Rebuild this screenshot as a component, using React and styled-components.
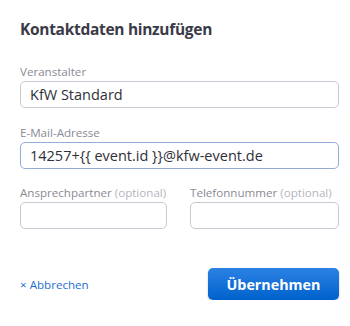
import React from "react";
import styled, { createGlobalStyle } from "styled-components";

const GlobalStyle = createGlobalStyle`
  body {
    margin: 0;
    background: #ffffff;
    font-family: "Open Sans", "Noto Sans", sans-serif;
  }
`;

const Dialog = styled.div`
  width: 319px;
  padding: 18px 0 0 20px;
`;

const Title = styled.h2`
  margin: 0 0 24px;
  font-size: 15.5px;
  font-weight: 700;
  color: #3b3b47;
  line-height: 22px;
  letter-spacing: -0.3px;
`;

const Field = styled.label`
  display: flex;
  flex-direction: column;
  margin-bottom: ${(p) => p.$gap || 0}px;
`;

const Label = styled.span`
  font-size: 11.6px;
  line-height: 15px;
  color: #8a8a94;
  margin-bottom: 2px;
  white-space: nowrap;
`;

const Hint = styled.span`
  color: #b5b5c0;
`;

const Input = styled.div`
  box-sizing: border-box;
  height: 27px;
  border: 1px solid ${(p) => (p.$focused ? "#94acd6" : "#c9c9d3")};
  border-radius: 5px;
  padding: 0 9px;
  font-size: 14.5px;
  line-height: 25px;
  color: #2f2f38;
  white-space: nowrap;
`;

const Row = styled.div`
  display: grid;
  grid-template-columns: 147px 149px;
  column-gap: 23px;
`;

const Footer = styled.div`
  display: flex;
  justify-content: space-between;
  align-items: center;
  margin-top: 39px;
`;

const CancelLink = styled.a`
  font-size: 11.6px;
  color: #1f6fd0;
  text-decoration: none;
  display: flex;
  align-items: center;
  gap: 3px;
`;

const SubmitButton = styled.button`
  width: 131px;
  height: 32px;
  border: none;
  border-radius: 5px;
  background: linear-gradient(#2c82e4, #0061cc);
  box-shadow: 0 1px 2px rgba(0, 40, 100, 0.3);
  color: #fff;
  font-family: inherit;
  font-size: 14.3px;
  font-weight: 700;
  cursor: pointer;
`;

export default function App() {
  return (
    <>
      <GlobalStyle />
      <Dialog>
        <Title>Kontaktdaten hinzufügen</Title>
        <Field $gap={17}>
          <Label>Veranstalter</Label>
          <Input>KfW Standard</Input>
        </Field>
        <Field $gap={16}>
          <Label>E-Mail-Adresse</Label>
          <Input $focused>14257+{"{{"} event.id {"}}"}@kfw-event.de</Input>
        </Field>
        <Row>
          <Field>
            <Label>
              Ansprechpartner <Hint>(optional)</Hint>
            </Label>
            <Input />
          </Field>
          <Field>
            <Label>
              Telefonnummer <Hint>(optional)</Hint>
            </Label>
            <Input />
          </Field>
        </Row>
        <Footer>
          <CancelLink href="#">
            <span>×</span>
            <span>Abbrechen</span>
          </CancelLink>
          <SubmitButton>Übernehmen</SubmitButton>
        </Footer>
      </Dialog>
    </>
  );
}
